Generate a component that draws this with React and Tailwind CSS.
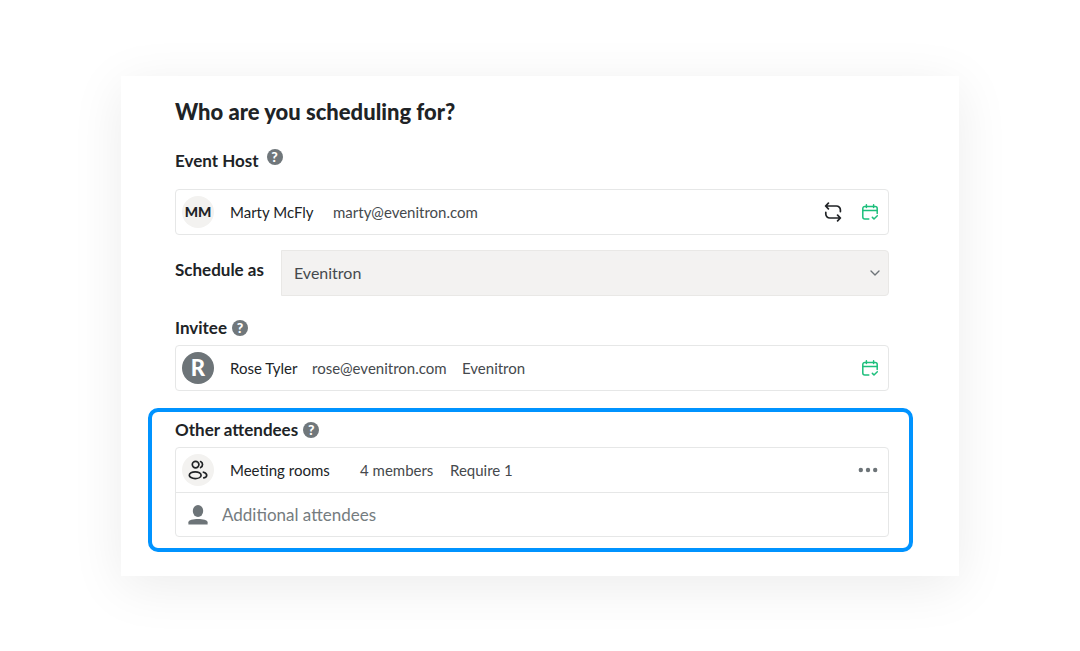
import { ChevronDown } from "lucide-react";

function HelpButton({ label }) {
  return (
    <button
      type="button"
      aria-label={label}
      className="flex size-4 items-center justify-center rounded-full bg-[#70777b] text-sm leading-4 font-black text-white"
    >
      ?
    </button>
  );
}

function SwapIcon() {
  return (
    <svg viewBox="0 0 18 20" className="h-5 w-[18px]" fill="none" stroke="currentColor" strokeWidth="1.7" strokeLinecap="round" strokeLinejoin="round">
      <path d="M4.4 1.2 1.6 4l2.8 2.8M1.8 4h10.6a4 4 0 0 1 4 4v1.6" />
      <path d="m13.6 13.2 2.8 2.8-2.8 2.800M16.200 16H5.800a4 4 0 0 1-4-4v-1.600" />
    </svg>
  );
}

function CalendarCheckIcon() {
  return (
    <svg viewBox="0 0 16 16" className="size-4" fill="none" stroke="currentColor" strokeWidth="1.5" strokeLinecap="round" strokeLinejoin="round">
      <path d="M6.8 15h-4a2 2 0 0 1-2-2V4.4a2 2 0 0 1 2-2h10.400a2 2 0 0 1 2 2v5" />
      <path d="M.8 6.6h14.4M4.400.8v2.800M11.600.8v2.800M10.400 13.400l1.600 1.600 3.300-3.200" />
    </svg>
  );
}

function GroupIcon() {
  return (
    <svg viewBox="0 0 20 20" className="size-5" fill="none" stroke="currentColor" strokeWidth="1.7" strokeLinecap="round">
      <circle cx="7.6" cy="4.6" r="3.3" />
      <ellipse cx="7.2" cy="15.2" rx="5.9" ry="3.4" />
      <path d="M12.6 1.6a3.3 3.3 0 0 1 0 6M15.400 12.200c2 .5 3.300 1.500 3.300 3s-1.100 2.300-2.900 2.700" />
    </svg>
  );
}

function PersonIcon() {
  return (
    <svg viewBox="0 0 20 20" className="size-5" fill="currentColor">
      <ellipse cx="10" cy="6" rx="5.2" ry="5.9" />
      <path d="M.4 19.4v-2.2c0-2 4.8-3.2 9.6-3.2s9.6 1.2 9.6 3.2v2.2z" />
    </svg>
  );
}

function MoreIcon() {
  return (
    <svg viewBox="0 0 20 6" className="h-[6px] w-5" fill="currentColor">
      <circle cx="2.8" cy="3" r="2.2" />
      <circle cx="10" cy="3" r="2.2" />
      <circle cx="17.2" cy="3" r="2.2" />
    </svg>
  );
}

function Avatar({ className, children }) {
  return <span className={`flex size-8 shrink-0 items-center justify-center rounded-full ${className}`}>{children}</span>;
}

export default function App() {
  return (
    <main className="min-h-screen bg-white px-[121px] py-[76px] font-['Lato',sans-serif] text-[15px] leading-6 text-[#202326]">
      <form className="bg-white pt-6 pr-[70px] pb-6 pl-[54px] shadow-[0_10px_50px_rgba(0,0,0,0.08)]">
        <h2 className="text-[22px] leading-6 font-black">Who are you scheduling for?</h2>

        <section className="mt-[25px]">
          <div className="flex items-start gap-2">
            <h3 className="text-[17px] leading-6 font-bold">Event Host</h3>
            <HelpButton label="About the event host" />
          </div>
          <div className="mt-4 flex h-[46px] items-center rounded-sm border border-[#e6e7e7] px-[6px]">
            <Avatar className="bg-[#f3f2f0] text-sm font-black">MM</Avatar>
            <span className="ml-4 w-[103px]">Marty McFly</span>
            <span className="text-[#45494d]">marty@evenitron.com</span>
            <button type="button" aria-label="Change host" className="ml-auto">
              <SwapIcon />
            </button>
            <button type="button" aria-label="Host calendar" className="mr-1 ml-5 text-[#1dbf7c]">
              <CalendarCheckIcon />
            </button>
          </div>
        </section>

        <div className="mt-[15px] flex items-start">
          <label htmlFor="schedule-as" className="w-[106px] shrink-0 text-[17px] leading-10 font-bold">
            Schedule as
          </label>
          <div className="relative flex-1">
            <select
              id="schedule-as"
              className="block h-[46px] w-full appearance-none rounded-r-sm border border-[#e9e8e6] bg-[#f3f2f1] px-3 text-base text-[#45494d]"
            >
              <option>Evenitron</option>
            </select>
            <ChevronDown size={16} className="pointer-events-none absolute top-[15px] right-[6px] text-[#6d7478]" />
          </div>
        </div>

        <section className="mt-5">
          <div className="flex items-center gap-[5px]">
            <h3 className="text-[17px] leading-6 font-bold">Invitee</h3>
            <HelpButton label="About the invitee" />
          </div>
          <div className="mt-[5px] flex h-[46px] items-center rounded-sm border border-[#e6e7e7] px-[6px]">
            <Avatar className="bg-[#6d7478] text-[22px] font-black text-white">R</Avatar>
            <span className="ml-4 w-[82px]">Rose Tyler</span>
            <span className="w-[150px] text-[#45494d]">rose@evenitron.com</span>
            <span className="text-[#45494d]">Evenitron</span>
            <button type="button" aria-label="Invitee calendar" className="mr-1 ml-auto text-[#1dbf7c]">
              <CalendarCheckIcon />
            </button>
          </div>
        </section>

        <section className="mt-[17px] -mr-6 -ml-[27px] rounded-[10px] border-4 border-[#0093ff] pt-[6px] pr-5 pb-[11px] pl-[23px]">
          <div className="flex items-center gap-[5px]">
            <h3 className="text-[17px] leading-6 font-bold">Other attendees</h3>
            <HelpButton label="About other attendees" />
          </div>
          <div className="mt-[5px] rounded-sm border border-[#e6e7e7]">
            <div className="flex h-[45px] items-center border-b border-[#e6e7e7] px-[6px]">
              <Avatar className="bg-[#f3f2f0]">
                <GroupIcon />
              </Avatar>
              <span className="ml-4 w-[130px]">Meeting rooms</span>
              <span className="w-[90px] text-[#45494d]">4 members</span>
              <span className="text-[#45494d]">Require 1</span>
              <button type="button" aria-label="More options" className="mr-1 ml-auto text-[#6d7478]">
                <MoreIcon />
              </button>
            </div>
            <label className="flex h-[43px] items-center px-3 text-[#6d7478]">
              <PersonIcon />
              <input
                type="text"
                placeholder="Additional attendees"
                aria-label="Additional attendees"
                className="ml-[14px] flex-1 text-[17px] outline-none placeholder:text-[#757c80]"
              />
            </label>
          </div>
        </section>
      </form>
    </main>
  );
}
